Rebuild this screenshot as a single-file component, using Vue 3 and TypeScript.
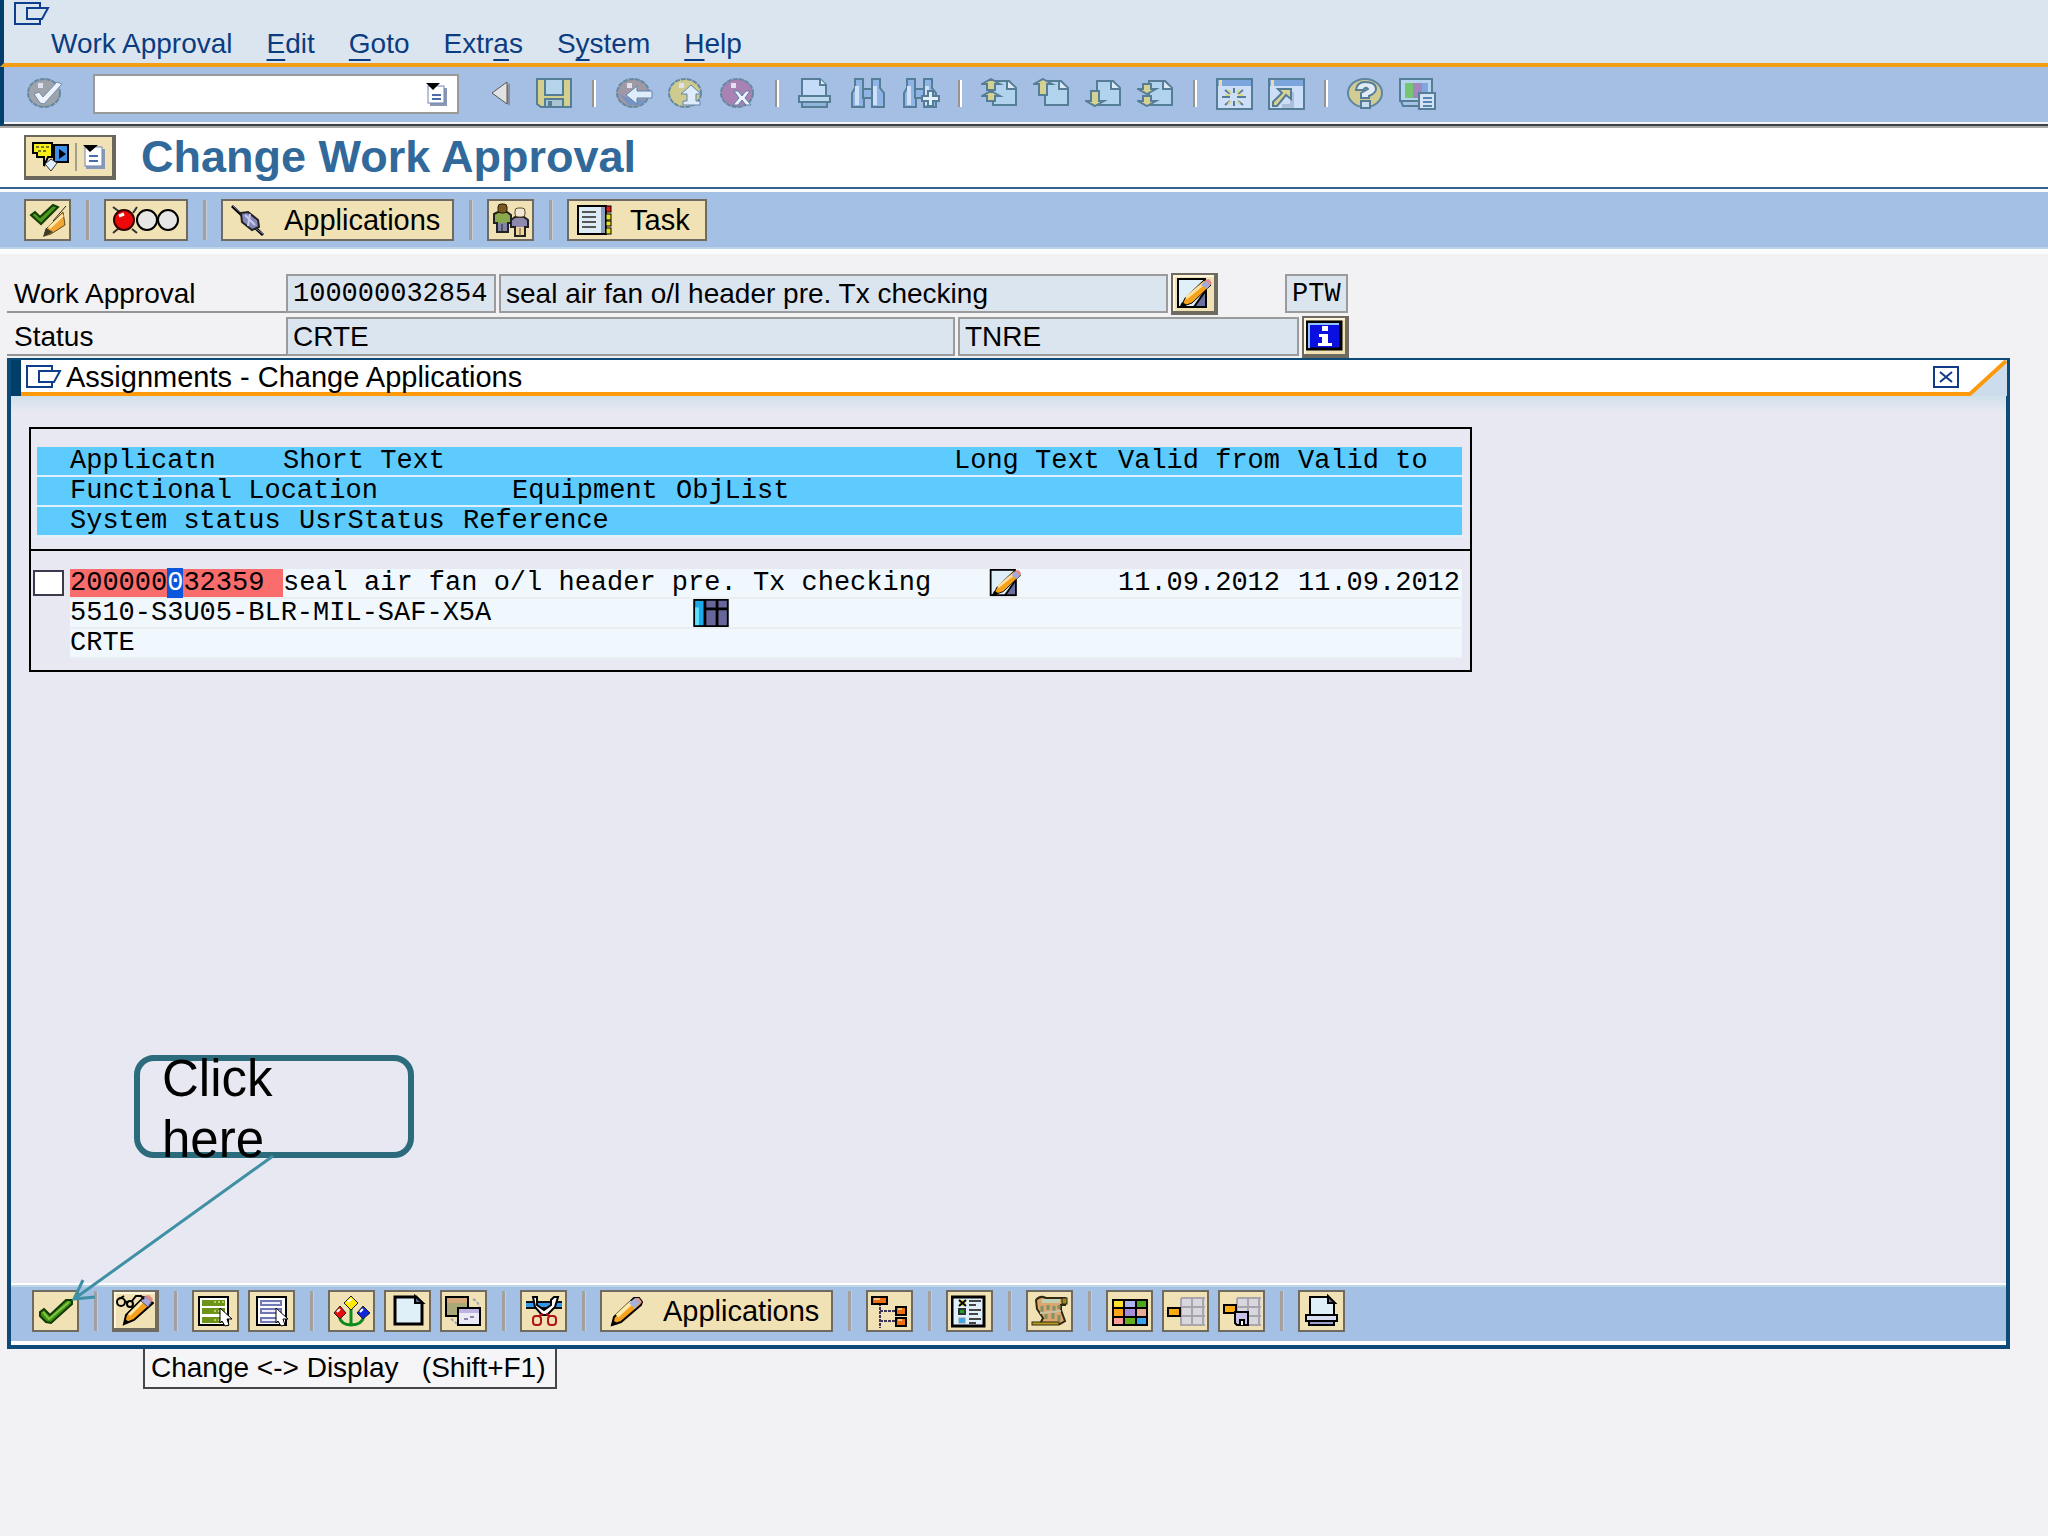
<script setup lang="ts">
import { ref } from 'vue'

type ToolEntry = { kind: 'sep' } | { kind: 'icon'; icon: string; label: string; raised?: boolean } | { kind: 'text'; icon: string; label: string; wide?: boolean }

interface MenuEntry {
  before: string
  key: string
  after: string
}

const command = ref('')
const rowChecked = ref(false)

const menus: MenuEntry[] = [
  { before: 'Work Approval', key: '', after: '' },
  { before: '', key: 'E', after: 'dit' },
  { before: '', key: 'G', after: 'oto' },
  { before: 'Extr', key: 'a', after: 's' },
  { before: 'S', key: 'y', after: 'stem' },
  { before: '', key: 'H', after: 'elp' },
]

const sep: ToolEntry = { kind: 'sep' }

const systemTools: ToolEntry[] = [
  { kind: 'icon', icon: 'triangle', label: 'Collapse command field' },
  { kind: 'icon', icon: 'save', label: 'Save' },
  sep,
  { kind: 'icon', icon: 'back', label: 'Back' },
  { kind: 'icon', icon: 'exit', label: 'Exit' },
  { kind: 'icon', icon: 'cancel', label: 'Cancel' },
  sep,
  { kind: 'icon', icon: 'printMuted', label: 'Print' },
  { kind: 'icon', icon: 'find', label: 'Find' },
  { kind: 'icon', icon: 'findNext', label: 'Find next' },
  sep,
  { kind: 'icon', icon: 'firstPage', label: 'First page' },
  { kind: 'icon', icon: 'prevPage', label: 'Previous page' },
  { kind: 'icon', icon: 'nextPage', label: 'Next page' },
  { kind: 'icon', icon: 'lastPage', label: 'Last page' },
  sep,
  { kind: 'icon', icon: 'session', label: 'Create session' },
  { kind: 'icon', icon: 'shortcut', label: 'Create shortcut' },
  sep,
  { kind: 'icon', icon: 'help', label: 'Help' },
  { kind: 'icon', icon: 'layout', label: 'Customize local layout' },
]

const appTools: ToolEntry[] = [
  { kind: 'icon', icon: 'checkPencil', label: 'Check' },
  sep,
  { kind: 'icon', icon: 'lights', label: 'Status' },
  sep,
  { kind: 'text', icon: 'connector', label: 'Applications', wide: true },
  sep,
  { kind: 'icon', icon: 'people', label: 'Partner' },
  sep,
  { kind: 'text', icon: 'notebook', label: 'Task' },
]

const popupTools: ToolEntry[] = [
  { kind: 'icon', icon: 'check', label: 'Continue' },
  sep,
  { kind: 'icon', icon: 'glassesPencil', label: 'Change or display', raised: true },
  sep,
  { kind: 'icon', icon: 'selectAll', label: 'Select all' },
  { kind: 'icon', icon: 'deselectAll', label: 'Deselect all' },
  sep,
  { kind: 'icon', icon: 'assign', label: 'Assign' },
  { kind: 'icon', icon: 'page', label: 'Create' },
  { kind: 'icon', icon: 'copy', label: 'Copy' },
  sep,
  { kind: 'icon', icon: 'cut', label: 'Delete assignment' },
  sep,
  { kind: 'text', icon: 'pencil', label: 'Applications', wide: true },
  sep,
  { kind: 'icon', icon: 'tree', label: 'Hierarchy' },
  sep,
  { kind: 'icon', icon: 'legend', label: 'Status overview' },
  sep,
  { kind: 'icon', icon: 'scroll', label: 'Action log' },
  sep,
  { kind: 'icon', icon: 'grid', label: 'Current display variant' },
  { kind: 'icon', icon: 'gridPick', label: 'Choose variant' },
  { kind: 'icon', icon: 'gridSave', label: 'Save variant' },
  sep,
  { kind: 'icon', icon: 'print', label: 'Print' },
]

const M = '#567d96'
const sheetMuted = `<path d="M12 3H28L35 10V27H12Z" fill="#b2d3ed" stroke="${M}" stroke-width="2"/><path d="M26 3V11H35" fill="#dce9f6" stroke="${M}" stroke-width="2"/>`
const up = (x: number, y: number, h: number) =>
  `<path d="M${x} ${y}L${x + 9} ${y + 5}H${x + 4}V${y + h}H${x - 4}V${y + 5}H${x - 9}Z" fill="#d5d193" stroke="${M}" stroke-width="2"/>`
const down = (x: number, y: number, h: number) =>
  `<path d="M${x} ${y}L${x + 9} ${y - 5}H${x + 4}V${y - h}H${x - 4}V${y - 5}H${x - 9}Z" fill="#d5d193" stroke="${M}" stroke-width="2"/>`
const disc = (fill: string) =>
  `<ellipse cx="18" cy="15" rx="16" ry="14" fill="${fill}" stroke="#6489a0" stroke-width="2" stroke-dasharray="5 1"/><rect x="12" y="5" width="5" height="5" fill="#dfe2ee"/>`
const binoculars = `<path d="M5 1H13V11H22V1H30V10L34 15V29H22V20H14V29H2V15L5 10Z" fill="#8fb4e6" stroke="${M}" stroke-width="2"/><path d="M7 8V27M25 8V27" stroke="#cfe0f8" stroke-width="4"/><path d="M13 11V20H22V11" fill="none" stroke="${M}" stroke-width="2"/>`
const pencilShape = `<path d="M8 31L10 22L28 4L37 10L18 27Z" fill="#f5a11c" stroke="#000" stroke-width="2"/><path d="M13 22L28 7" stroke="#ffe9a8" stroke-width="3"/><path d="M25 8L29 3L36 8L32 14Z" fill="#a6a8d8" stroke="#554f70"/><path d="M29 3L33 2L37 6L35 9Z" fill="#e58a8a"/><path d="M8 31L9 26L13 29Z" fill="#000"/>`
const cursor = `<path d="M23 14L35 25H30L32 31L28 32L25 27L23 29Z" fill="#fff" stroke="#000" stroke-width="1"/>`
const greyGrid = `<path d="M14 4H38V32H14Z" fill="#d9d7de"/><path d="M14 4H38M14 13H38M14 22H38M14 31H38M14 4V32M25 4V32M36 4V32" stroke="#a9a5ad" stroke-width="2"/>`

const icons: Record<string, string> = {
  enter: `${disc('#9fa4ac')}<path d="M8 16L13 14L17 19L31 4L36 6L18 26L14 25Z" fill="#edf3fc" stroke="#6f8ca8" stroke-width="1"/>`,
  triangle: `<path d="M10 16L26 5V28Z" fill="#8a8f9a"/><path d="M8 15L23 4V26Z" fill="#e2e2e2" stroke="#555" stroke-width="1"/>`,
  save: `<path d="M1 1H35V29H5L1 26Z" fill="#d3d08f" stroke="${M}" stroke-width="2"/><rect x="9" y="1" width="18" height="16" fill="#b7d5ea" stroke="${M}" stroke-width="2"/><rect x="9" y="21" width="18" height="8" fill="#a9c5d4" stroke="${M}" stroke-width="2"/><rect x="12" y="23" width="4" height="5" fill="${M}"/>`,
  back: `${disc('#a098a4')}<path d="M4 16L14 27H26L30 22H18Z" fill="#7594c6"/><path d="M11 17L22 8V13H37V20H22V26Z" fill="#dfecfb" stroke="#5f84ae" stroke-width="1"/>`,
  exit: `${disc('#cfcb8e')}<path d="M24 7L34 16H29V23H33V27H16V23H20V16H14Z" fill="#dfecfb" stroke="#5f84ae" stroke-width="1"/>`,
  cancel: `${disc('#a782b3')}<path d="M15 13H19L23 18L27 13H31L26 20L32 27H27L23 22L19 27H14L20 20Z" fill="#eef3fc" stroke="#5f7ea8" stroke-width="1"/>`,
  printMuted: `<path d="M4 17V1H22L28 7V17" fill="#c4dcf8" stroke="${M}" stroke-width="2"/><path d="M22 1V7H28" fill="#dce9f6" stroke="${M}" stroke-width="2"/><rect x="1" y="18" width="31" height="6" fill="#bcd7ee" stroke="${M}" stroke-width="2"/><rect x="4" y="24" width="25" height="5" fill="#8fb4e0" stroke="${M}" stroke-width="2"/>`,
  find: binoculars,
  findNext: `${binoculars}<path d="M26 13H31V18H37V23H31V28H26V23H20V18H26Z" fill="#e3eefb" stroke="${M}" stroke-width="2"/>`,
  firstPage: sheetMuted + up(10, 1, 11) + up(10, 13, 10),
  prevPage: sheetMuted + up(10, 1, 16),
  nextPage: sheetMuted + down(10, 28, 15),
  lastPage: sheetMuted + down(10, 16, 10) + down(10, 28, 10),
  session: `<rect x="1" y="1" width="35" height="30" fill="#cddff8" stroke="${M}" stroke-width="2"/><rect x="2" y="2" width="33" height="6" fill="#7ba5dc"/><rect x="3" y="2" width="3" height="6" fill="#e8dca0"/><path d="M6 19H14M21 19H30M18 10V15M18 23V28M9 12L14 16M27 12L22 16M9 27L14 23M27 27L22 23" stroke="${M}" stroke-width="2"/><path d="M9 17H14M22 17H27M12 12L15 15M24 12L21 15M12 26L15 23M24 26L21 23" stroke="#d9d58a" stroke-width="2"/>`,
  shortcut: `<rect x="1" y="1" width="35" height="30" fill="#cddff8" stroke="${M}" stroke-width="2"/><rect x="2" y="2" width="33" height="6" fill="#7ba5dc"/><rect x="3" y="2" width="3" height="6" fill="#e8dca0"/><path d="M24 14V28H14" stroke="#a9bfdc" stroke-width="4" fill="none"/><path d="M10 11H23V21L18 17L9 28L5 28V24L14 15Z" fill="#d9d293" stroke="${M}" stroke-width="2"/>`,
  help: `<ellipse cx="18" cy="15" rx="17" ry="14" fill="#d0cc93" stroke="#5f86a0" stroke-width="2"/><path d="M9 12Q10 4 18 4Q29 4 29 11Q29 15 22 18V20H14V15L21 11Q19 8 16 12Z" fill="#e1ebf8" stroke="${M}" stroke-width="2"/><rect x="14" y="23" width="9" height="7" fill="#c9dced" stroke="${M}" stroke-width="2"/>`,
  layout: `<rect x="1" y="1" width="32" height="22" fill="#b6d3ef" stroke="${M}" stroke-width="2"/><rect x="6" y="5" width="8" height="15" fill="#76c573"/><rect x="14" y="5" width="9" height="15" fill="#a287bd"/><rect x="23" y="5" width="6" height="15" fill="#80a7e0"/><path d="M2 23H20V28H4Z" fill="#a7c3e4" stroke="${M}" stroke-width="2"/><rect x="20" y="15" width="16" height="16" fill="#d3e3f6" stroke="${M}" stroke-width="2"/><path d="M24 20H33M24 24H33M24 28H33" stroke="#5a84b0" stroke-width="2"/>`,

  checkPencil: `<path d="M2 12L6 9L11 14L24 2L29 4L12 21Z" fill="#4b9a1e" stroke="#143d05" stroke-width="2"/><path d="M15 33L17 26L34 9L36 22L22 31Z" fill="#f0a634" stroke="#6a4a17" stroke-width="1"/><path d="M20 25L34 12" stroke="#ffe7b0" stroke-width="3"/><path d="M14 34L17 25L24 29Z" fill="#3c3c2c"/><path d="M24 18L37 3" stroke="#222" stroke-width="1"/>`,
  check: `<path d="M3 18L7 15L13 21L29 6H35V10L14 29L9 28L3 22Z" fill="#3f8f10" stroke="#123806" stroke-width="2"/><path d="M6 18L12 25L32 8" fill="none" stroke="#7fc442" stroke-width="2"/>`,
  glassesPencil: `${pencilShape}<ellipse cx="5" cy="9" rx="4" ry="4" fill="none" stroke="#000" stroke-width="2"/><ellipse cx="14" cy="11" rx="3" ry="3" fill="none" stroke="#000" stroke-width="2"/><path d="M3 6L8 3M9 8L12 10M16 8L20 3H25L28 6" fill="none" stroke="#000" stroke-width="2"/>`,
  selectAll: `<rect x="2" y="3" width="29" height="28" fill="#fff" stroke="#000" stroke-width="2"/><rect x="5" y="6" width="23" height="6" fill="#6d9418"/><rect x="5" y="14" width="23" height="6" fill="#6d9418"/><rect x="5" y="23" width="23" height="6" fill="#6d9418"/><path d="M17 8H27M17 17H23M17 26H22" stroke="#b7cf62" stroke-width="2" stroke-dasharray="2 2"/>${cursor}`,
  deselectAll: `<rect x="4" y="3" width="29" height="28" fill="#fff" stroke="#000" stroke-width="2"/><g fill="#eef" stroke="#7078b4" stroke-width="2"><rect x="8" y="7" width="20" height="4"/><rect x="8" y="15" width="20" height="4"/><rect x="8" y="24" width="20" height="4"/></g>${cursor}`,
  assign: `<path d="M18 12V31M6 22Q8 31 18 31Q29 31 31 22" fill="none" stroke="#0b8a1e" stroke-width="3"/><path d="M18 2L25 9L18 16L11 9Z" fill="#ffe900" stroke="#222"/><path d="M7 12L13 19L7 25L1 19Z" fill="#e90b0b" stroke="#222"/><path d="M30 12L37 19L30 25L24 19Z" fill="#1028d8" stroke="#222"/><path d="M15 8L18 5M4 18L7 15M27 18L30 15" stroke="#fff" stroke-width="2"/>`,
  page: `<path d="M6 3H27L33 9V30H6Z" fill="#e0f0f8" stroke="#000" stroke-width="3"/><path d="M26 2V9H34Z" fill="#596080" stroke="#000" stroke-width="2"/>`,
  copy: `<path d="M4 20Q8 30 16 30M28 5Q34 8 34 14" fill="none" stroke="#9ea0bd" stroke-width="2" stroke-dasharray="3 2"/><rect x="1" y="3" width="22" height="19" fill="#a8a878" stroke="#000" stroke-width="2"/><rect x="2" y="4" width="20" height="5" fill="#d6a877"/><rect x="13" y="14" width="22" height="17" fill="#ece9f6" stroke="#000" stroke-width="2"/><rect x="14" y="15" width="20" height="4" fill="#bdb3e0"/><path d="M19 25H23M25 23H29" stroke="#8b84aa" stroke-width="2"/>`,
  cut: `<path d="M1 8H37M1 14H37" stroke="#111" stroke-width="2"/><path d="M1 11H37" stroke="#3498ea" stroke-width="4"/><path d="M8 3H12V11L19 16L26 11V6L29 3H33L30 13L22 21H17L10 13Z" fill="#fff" stroke="#000" stroke-width="2"/><rect x="8" y="22" width="8" height="9" rx="3" fill="none" stroke="#b01414" stroke-width="2"/><rect x="23" y="22" width="8" height="9" rx="3" fill="none" stroke="#b01414" stroke-width="2"/><path d="M14 22L18 20M25 22L21 20" stroke="#b01414" stroke-width="2"/>`,
  pencil: `<path d="M4 31L6 23L26 4H31L34 8L33 11L13 28Z" fill="#f5a11c" stroke="#000" stroke-width="2"/><path d="M9 22L24 8" stroke="#ffe9a8" stroke-width="4"/><path d="M21 9L27 4L33 7L27 15Z" fill="#a6b1dc"/><path d="M27 4L31 4L34 8L32 10Z" fill="#d99a9a"/><path d="M3 32L5 26L10 30Z" fill="#000"/>`,
  tree: `<path d="M9 9V34M9 17H24M9 27H24" stroke="#3e3654" stroke-width="2" stroke-dasharray="3 1"/><g stroke="#000" stroke-width="2" fill="#ee6f12"><rect x="1" y="3" width="15" height="7"/><rect x="25" y="13" width="10" height="8"/><rect x="25" y="24" width="10" height="8"/></g><path d="M3 5H9M27 15H31M27 26H31" stroke="#ffc37a" stroke-width="2"/>`,
  legend: `<rect x="1" y="3" width="32" height="29" fill="#dff0fb" stroke="#000" stroke-width="3"/><rect x="8" y="6" width="7" height="6" fill="#e6e325"/><path d="M8 6L15 12M15 6L8 12" stroke="#000" stroke-width="2"/><rect x="8" y="15" width="6" height="5" fill="#17a12c" stroke="#333" stroke-width="2"/><rect x="8" y="24" width="6" height="5" fill="#38a6f0" stroke="#89a"/><path d="M18 7H30M18 11H25M18 16H30M18 20H27M18 25H30M18 29H25" stroke="#444" stroke-width="2"/>`,
  scroll: `<path d="M5 6Q9 1 15 4H34V11H30V16L34 27L29 30H9L12 24L6 15Z" fill="#dca66c" stroke="#2f2a10" stroke-width="2"/><path d="M11 5H29V9H11Z" fill="#bfd0b5"/><path d="M11 12V18M17 11V16M23 12V17M28 11V15M15 20V25M22 19V25M28 21V27" stroke="#7f9168" stroke-width="3"/><path d="M9 19L30 17" stroke="#c9c0a8" stroke-width="2"/><rect x="1" y="28" width="27" height="3" fill="#b89a1e" stroke="#2f2a10"/><rect x="31" y="4" width="5" height="6" fill="#9b8d1c" stroke="#222"/>`,
  grid: `<rect x="1" y="5" width="36" height="27" fill="#000"/><g><rect x="3" y="7" width="9" height="6" fill="#ffe02e"/><rect x="14" y="7" width="10" height="6" fill="#aeb3ec"/><rect x="26" y="7" width="9" height="6" fill="#4ba81e"/><rect x="3" y="15" width="9" height="7" fill="#ffa318"/><rect x="14" y="15" width="10" height="7" fill="#a68ed8"/><rect x="26" y="15" width="9" height="7" fill="#e8ae93"/><rect x="3" y="24" width="9" height="6" fill="#ff9c9c"/><rect x="14" y="24" width="10" height="6" fill="#66b01d"/><rect x="26" y="24" width="9" height="6" fill="#38a3f0"/></g>`,
  gridPick: `${greyGrid}<rect x="1" y="14" width="12" height="8" fill="#ffac14" stroke="#000" stroke-width="2"/>`,
  gridSave: `${greyGrid}<rect x="1" y="11" width="12" height="8" fill="#ffac14" stroke="#000" stroke-width="2"/><path d="M12 18H25V31H14L12 29Z" fill="#c9c2e8" stroke="#000" stroke-width="2"/><rect x="16" y="25" width="6" height="6" fill="#000"/><rect x="18" y="27" width="2" height="4" fill="#fff"/>`,
  print: `<path d="M7 20V3H25L31 9V20" fill="#e0f0f8" stroke="#000" stroke-width="2"/><path d="M25 2V9H32Z" fill="#666c90" stroke="#000" stroke-width="2"/><rect x="3" y="21" width="31" height="6" fill="#d9ddf0" stroke="#000" stroke-width="2"/><rect x="6" y="27" width="25" height="4" fill="#9a9fd0" stroke="#000" stroke-width="2"/>`,
  connector: `<path d="M3 3L34 32" stroke="#000" stroke-width="3"/><path d="M4 3L13 11M26 25L34 31" stroke="#8a8fd0" stroke-width="1"/><path d="M12 10L19 9L29 17L30 24L23 27L13 19Z" fill="#8489b8" stroke="#222" stroke-width="2"/><path d="M16 12L26 22M21 11L19 23" stroke="#c6c9ec" stroke-width="2"/>`,
  people: `<path d="M2 11L6 9H15L19 12V20H16V29H5V20H2Z" fill="#8aa94c" stroke="#222" stroke-width="2"/><rect x="6" y="20" width="9" height="8" fill="#8184a8"/><path d="M10 21V29" stroke="#222" stroke-width="1"/><rect x="6" y="1" width="9" height="9" rx="3" fill="#7a5a20" stroke="#2a1a05"/><path d="M19 17L23 14H32L36 17V24H33V33H23V24H19Z" fill="#8d88ae" stroke="#222" stroke-width="2"/><rect x="24" y="24" width="8" height="8" fill="#ecd29c"/><path d="M28 25V33" stroke="#6a5428" stroke-width="1"/><rect x="23" y="5" width="10" height="9" rx="3" fill="#efe6d4" stroke="#5a4a2a"/>`,
  notebook: `<path d="M3 3H31V31H3Z" fill="#dcebf4" stroke="#000" stroke-width="2"/><rect x="26" y="4" width="4" height="26" fill="#8d9dbe"/><path d="M7 9H21M7 14H21M7 19H21M7 24H21" stroke="#555" stroke-width="2"/><g stroke="#000" stroke-width="1"><rect x="31" y="3" width="5" height="6" fill="#e01c1c"/><rect x="31" y="11" width="5" height="6" fill="#e5e020"/><rect x="31" y="18" width="5" height="5" fill="#e5e020"/><rect x="31" y="25" width="5" height="6" fill="#e5e020"/></g>`,
  editNote: `<rect x="3" y="3" width="27" height="28" fill="#e0f0f8" stroke="#000" stroke-width="2"/><path d="M19 31H31V14Z" fill="#6a70a0" stroke="#000" stroke-width="2"/><path d="M6 31L10 22L29 4L36 9L17 27Z" fill="#f5a11c" stroke="#000" stroke-width="1"/><path d="M11 22L28 8" stroke="#ffe0a0" stroke-width="3"/><path d="M26 9L31 4L36 8L32 13Z" fill="#a6a8d8"/><path d="M30 4L34 3L37 7L35 9Z" fill="#e58a8a"/><path d="M4 32L7 26L12 29Z" fill="#000"/>`,
  info: `<rect x="1" y="3" width="34" height="27" fill="#0a10e0" stroke="#000" stroke-width="3"/><path d="M3 29V5H33" fill="none" stroke="#8ec3ff" stroke-width="2"/><path d="M16 7H22V12H16ZM13 15H22V24H26V27H12V24H16V18H13Z" fill="#fff"/>`,
}
</script>

<template>
  <div class="screen">
    <header class="top">
      <div class="menu-area">
        <svg class="exit-mark" viewBox="0 0 36 24" aria-hidden="true">
          <path d="M26 6V1H1V22H26V18M13 6H34L28 17H13Z" />
        </svg>
        <nav class="menu" aria-label="Main menu">
          <button v-for="m in menus" :key="m.before + m.key + m.after" type="button">{{ m.before }}<u v-if="m.key">{{ m.key }}</u>{{ m.after }}</button>
        </nav>
      </div>
      <div class="system-bar">
        <button class="plain" type="button" aria-label="Enter">
          <svg viewBox="0 0 38 32" v-html="icons.enter" />
        </button>
        <div class="command">
          <input v-model="command" type="text" aria-label="Command" />
          <button type="button" aria-label="Command history">
            <svg viewBox="0 0 22 24" aria-hidden="true">
              <rect x="5" y="6" width="17" height="18" fill="#8b98b4" />
              <rect x="3" y="4" width="16" height="17" fill="#fff" stroke="#6e86b4" />
              <path d="M7 13H16M7 17H16" stroke="#4a6aa8" stroke-width="2" />
              <path d="M1 1H15L8 8Z" fill="#000" />
            </svg>
          </button>
        </div>
        <template v-for="(t, i) in systemTools" :key="i">
          <span v-if="t.kind === 'sep'" class="line" />
          <button v-else class="plain" type="button" :aria-label="t.label">
            <svg viewBox="0 0 38 32" v-html="icons[t.icon]" />
          </button>
        </template>
      </div>
    </header>

    <div class="title-row">
      <button class="object-services" type="button" aria-label="Services for object">
        <svg viewBox="0 0 80 34" aria-hidden="true">
          <path d="M3 4H22V18H18L14 27V18H7V14H3Z" fill="#f7ee1c" stroke="#000" stroke-width="2" />
          <path d="M6 8H20M8 12H18" stroke="#777a20" stroke-width="2" stroke-dasharray="3 2" />
          <rect x="24" y="6" width="14" height="17" fill="#3f8fe8" stroke="#000" stroke-width="2" />
          <path d="M29 10V20L36 15Z" fill="#000" />
          <path d="M15 25L21 20L27 24L21 32Z" fill="#dff0ff" stroke="#333" />
          <path d="M46 4V32" stroke="#a49f8c" stroke-width="2" />
          <rect x="56" y="10" width="19" height="20" fill="#8b98b4" />
          <rect x="55" y="8" width="17" height="19" fill="#fff" stroke="#6e86b4" />
          <path d="M59 17H68M59 22H68" stroke="#4a6aa8" stroke-width="2" />
          <path d="M53 6H68L60 13Z" fill="#000" />
        </svg>
      </button>
      <h1>Change Work Approval</h1>
    </div>

    <div class="bar app-bar">
      <template v-for="(t, i) in appTools" :key="i">
        <span v-if="t.kind === 'sep'" class="divider" />
        <button v-else class="tool" :class="{ text: t.kind === 'text', wide: t.kind === 'text' && t.wide, lights: t.icon === 'lights' }" type="button" :aria-label="t.label">
          <svg v-if="t.icon === 'lights'" viewBox="0 0 72 34" aria-hidden="true">
            <path d="M3 4L11 10M23 10L27 4M3 30L9 25M22 26L27 30" stroke="#333" stroke-width="2" />
            <circle cx="14" cy="17" r="10" fill="#ee0808" stroke="#300" stroke-width="2" />
            <path d="M9 13L14 11" stroke="#fff" stroke-width="3" />
            <circle cx="37" cy="17" r="10" fill="#e6e6e6" stroke="#000" stroke-width="2" />
            <circle cx="58" cy="17" r="10" fill="#e6e6e6" stroke="#000" stroke-width="2" />
          </svg>
          <svg v-else viewBox="0 0 38 34" v-html="icons[t.icon]" />
          <span v-if="t.kind === 'text'">{{ t.label }}</span>
        </button>
      </template>
    </div>

    <section class="form">
      <div class="form-row">
        <label for="wa">Work Approval</label>
        <input id="wa" class="mono number" readonly value="100000032854" />
        <input class="desc" readonly aria-label="Description" value="seal air fan o/l header pre. Tx checking" />
        <button class="tool raised" type="button" aria-label="Long text">
          <svg viewBox="0 0 38 34" v-html="icons.editNote" />
        </button>
        <input class="mono usage" readonly aria-label="Usage" value="PTW" />
      </div>
      <div class="form-row">
        <label for="st">Status</label>
        <input id="st" class="status" readonly value="CRTE" />
        <input class="user-status" readonly aria-label="User status" value="TNRE" />
        <button class="tool raised" type="button" aria-label="Status details">
          <svg viewBox="0 0 38 34" v-html="icons.info" />
        </button>
      </div>
    </section>

    <section class="popup" aria-labelledby="popup-title">
      <div class="popup-title">
        <svg class="exit-mark" viewBox="0 0 36 24" aria-hidden="true">
          <path d="M26 6V1H1V22H26V18M13 6H34L28 17H13Z" />
        </svg>
        <h2 id="popup-title">Assignments - Change Applications</h2>
        <button class="close" type="button" aria-label="Close">
          <svg viewBox="0 0 26 22" aria-hidden="true">
            <rect x="1" y="1" width="24" height="20" fill="#fff" stroke="#123a86" stroke-width="2" />
            <path d="M7 6L19 16M19 6L7 16" stroke="#123a86" stroke-width="2" />
          </svg>
        </button>
        <svg class="corner" viewBox="0 0 40 36" aria-hidden="true">
          <path d="M0 0H40V36H0Z" fill="#cddcec" />
          <path d="M0 0H39L3 34H0Z" fill="#fff" />
          <path d="M0 34H3L39 1" fill="none" stroke="#fc9a0b" stroke-width="4" />
        </svg>
      </div>

      <div class="popup-body">
        <div class="list">
          <table>
            <colgroup>
              <col class="c-mark" /><col class="c13" /><col class="c1" /><col class="c10" /><col class="c3" /><col class="c10" /><col class="c17" /><col class="c10" /><col class="c11" /><col class="c-last" />
            </colgroup>
            <thead>
              <tr><th></th><th>Applicatn</th><th colspan="5">Short Text</th><th>Long Text</th><th>Valid from</th><th>Valid to</th></tr>
              <tr><th></th><th colspan="4">Functional Location</th><th>Equipment</th><th colspan="4">ObjList</th></tr>
              <tr><th></th><th colspan="2">System status</th><th>UsrStatus</th><th colspan="6">Reference</th></tr>
              <tr class="rule" aria-hidden="true"><td colspan="10"></td></tr>
            </thead>
            <tbody>
              <tr>
                <td class="mark"><input v-model="rowChecked" type="checkbox" aria-label="Select application" /></td>
                <td class="hit">200000<mark>0</mark>32359</td>
                <td colspan="5">seal air fan o/l header pre. Tx checking</td>
                <td class="note"><svg viewBox="2 2 36 31" v-html="icons.editNote" /></td>
                <td>11.09.2012</td>
                <td>11.09.2012</td>
              </tr>
              <tr>
                <td class="mark"></td>
                <td colspan="4">5510-S3U05-BLR-MIL-SAF-X5A</td>
                <td></td>
                <td class="object" colspan="4">
                  <svg viewBox="0 0 38 30" aria-hidden="true">
                    <rect width="38" height="30" fill="#000" />
                    <rect x="2" y="2" width="9" height="26" fill="#1fa9e8" />
                    <path d="M2 9H6V28H2Z" fill="#62e4ff" />
                    <path d="M14 2H24V9H14ZM27 2H36V9H27ZM14 12H24V28H14ZM27 12H36V28H27Z" fill="#67669a" />
                  </svg>
                </td>
              </tr>
              <tr><td class="mark"></td><td colspan="9">CRTE</td></tr>
            </tbody>
          </table>
        </div>
      </div>

      <div class="bar popup-bar">
        <template v-for="(t, i) in popupTools" :key="i">
          <span v-if="t.kind === 'sep'" class="divider" />
          <button v-else class="tool" :class="{ text: t.kind === 'text', wide: t.kind === 'text' && t.wide, raised: t.kind === 'icon' && t.raised }" type="button" :aria-label="t.label">
            <svg viewBox="0 0 38 34" v-html="icons[t.icon]" />
            <span v-if="t.kind === 'text'">{{ t.label }}</span>
          </button>
        </template>
      </div>

      <div class="callout">Click<br />here</div>
      <svg class="arrow" viewBox="0 0 212 155" aria-hidden="true">
        <path d="M205 6L6 149M15 130L6 149L27 147" />
      </svg>
      <div class="tooltip" role="tooltip">Change &lt;-&gt; Display &nbsp;&nbsp;(Shift+F1)</div>
    </section>
  </div>
</template>

<style>
body {
  margin: 0;
  background: #f2f1f4;
}
</style>

<style scoped>
.screen {
  box-sizing: border-box;
  display: flex;
  flex-direction: column;
  min-height: 100vh;
  padding-bottom: 187px;
  overflow: hidden;
  background: #f2f1f4;
  color: #000;
  font: 28px/32px "Liberation Sans", Arial, sans-serif;
}

.screen * {
  box-sizing: border-box;
}

button,
input {
  margin: 0;
  padding: 0;
  border: 0;
  border-radius: 0;
  background: none;
  color: inherit;
  font: inherit;
}

svg {
  display: block;
  flex: none;
}

h1,
h2 {
  margin: 0;
}

.top {
  border-bottom: 2px solid #a9a9a6;
  background: #dbe5f0;
}

.menu-area {
  height: 67px;
  border-bottom: 4px solid #f39c16;
  border-left: 4px solid #003f6c;
  padding: 2px 0 0 10px;
}

.exit-mark {
  width: 36px;
  height: 24px;
  fill: none;
  stroke: #0f3f8c;
  stroke-width: 2;
}

.menu {
  display: flex;
  gap: 34px;
  padding-left: 37px;
  color: #0b3c80;
}

.menu button {
  line-height: 36px;
}

.menu u {
  text-decoration-thickness: 2px;
  text-underline-offset: 6px;
  text-decoration-skip-ink: none;
}

.system-bar {
  display: flex;
  align-items: center;
  gap: 14px;
  height: 59px;
  padding: 0 22px 4px;
  border-bottom: 2px solid #3c4048;
  border-left: 4px solid #003f6c;
  box-shadow: inset 0 -2px #f3f7fb;
  background: #a4bfe3;
}

.plain,
.plain svg {
  width: 38px;
  height: 32px;
}

.line {
  width: 4px;
  height: 27px;
  margin: 0 5px 0 4px;
  border-left: 2px solid #98958e;
  background: #fff;
}

.command {
  display: flex;
  width: 366px;
  height: 40px;
  margin: 0 11px 0 15px;
  border: 2px solid #9a9a98;
  background: #fff;
}

.command input {
  flex: 1;
  min-width: 0;
}

.command button {
  padding: 0 10px;
}

.command svg {
  width: 22px;
  height: 24px;
}

.title-row {
  display: flex;
  align-items: center;
  gap: 25px;
  height: 61px;
  padding: 0 24px 1px;
  border-bottom: 2px solid #34648f;
  background: #fff;
}

.object-services {
  width: 92px;
  height: 45px;
  padding: 2px 4px;
  border: solid #6b675c;
  border-width: 2px 4px 4px 2px;
  background: #f0e2b4;
}

.object-services svg {
  width: 80px;
  height: 34px;
}

h1 {
  color: #31699b;
  font-size: 45px;
  font-weight: 700;
  line-height: 50px;
}

.bar {
  display: flex;
  align-items: center;
  gap: 9px;
  background: #a4c0e4;
}

.app-bar {
  height: 65px;
  padding: 0 24px 1px;
  border-top: 3px solid #fafcfe;
  border-bottom: 5px solid #fafcfe;
  box-shadow: inset 0 -2px #bcd3ea;
}

.divider {
  width: 4px;
  height: 40px;
  margin: 0 5px 0 6px;
  border-left: 3px solid #a3a19d;
  background: #c2cedd;
}

.tool {
  display: flex;
  flex: none;
  align-items: center;
  justify-content: center;
  width: 47px;
  height: 42px;
  border: 2px solid #6f6b60;
  background: #f0e2b4;
}

.tool svg {
  width: 38px;
  height: 34px;
}

.tool.text {
  justify-content: flex-start;
  gap: 17px;
  width: 140px;
  padding-left: 6px;
  font-size: 29px;
}

.tool.wide {
  width: 233px;
}

.tool.lights {
  width: 84px;
}

.tool.lights svg {
  width: 72px;
}

.tool.raised {
  border-width: 2px 4px 4px 2px;
  box-shadow: inset 2px 2px #fdf6dc;
}

.form {
  padding: 18px 0 0 7px;
}

.form-row {
  display: flex;
  align-items: center;
  gap: 3px;
  height: 43px;
}

.form-row label {
  width: 279px;
  height: 39px;
  margin-right: -3px;
  padding-left: 7px;
  border-bottom: 2px solid #949494;
  line-height: 40px;
}

.form-row input {
  height: 39px;
  padding: 0 5px;
  border: 2px solid #9b9b9b;
  background: #dbe5f0;
}

.form-row .mono {
  font: 27px/36px "Liberation Mono", monospace;
}

.form-row .number {
  width: 210px;
}

.form-row .desc {
  width: 669px;
}

.form-row .usage {
  width: 63px;
  margin-left: 64px;
}

.form-row .status {
  width: 669px;
}

.form-row .user-status {
  width: 341px;
}

.popup {
  position: relative;
  display: flex;
  flex: 1;
  flex-direction: column;
  margin: 0 38px 0 7px;
  border: 4px solid #0e4a77;
  border-top-width: 2px;
  background: #e7e8f1;
}

.popup-title {
  display: flex;
  align-items: center;
  height: 36px;
  padding-bottom: 2px;
  border-left: 10px solid #003f69;
  background: linear-gradient(#fff 32px, #fc9a0b 32px);
}

.popup-title .exit-mark {
  margin: 0 4px 0 5px;
}

.popup-title h2 {
  flex: 1;
  font-size: 29px;
  font-weight: 400;
  line-height: 32px;
}

.close {
  width: 26px;
  height: 22px;
}

.corner {
  width: 40px;
  height: 36px;
  margin: 0 -1px -2px 8px;
}

.popup-body {
  flex: 1;
  padding: 31px 18px;
  background: linear-gradient(#d0e0ea, #e7e8f1 16px);
}

.list {
  width: 1443px;
  padding-bottom: 11px;
  border: 2px solid #000;
}

table {
  width: 100%;
  border-collapse: separate;
  border-spacing: 0;
  table-layout: fixed;
  font: 27px/28px "Liberation Mono", monospace;
}

thead::before,
tbody::before {
  content: "";
  display: table-row;
  height: 18px;
}

.c-mark { width: 39px; }
.c1 { width: 16px; }
.c3 { width: 49px; }
.c10 { width: 164px; }
.c11 { width: 180px; }
.c13 { width: 213px; }
.c17 { width: 278px; }
.c-last { width: 172px; }

th,
td {
  height: 30px;
  padding: 0;
  border-bottom: 2px solid #e1f1fb;
  background-clip: padding-box;
  font-weight: 400;
  text-align: left;
  white-space: pre;
}

th {
  background-color: #5ecbff;
}

th:first-child {
  border-left: 6px solid #e7e8f1;
}

th:last-child,
td:last-child {
  border-right: 8px solid #e7e8f1;
}

td {
  border-bottom-color: #e8eef2;
  background-color: #f0f8fe;
}

.rule td {
  height: 14px;
  border-right: 0;
  border-bottom: 2px solid #000;
  background: none;
}

.mark {
  border-color: transparent;
  background: none;
}

.mark input {
  display: block;
  width: 31px;
  height: 26px;
  margin-left: 2px;
  border: 2px solid #3c3a4c;
  background: #fff;
  appearance: none;
}

.hit {
  background-color: #f96c6c;
}

mark {
  background: #0b57dc;
  color: #fff;
}

.note svg {
  width: 36px;
  height: 28px;
  margin-left: 34px;
  overflow: visible;
}

.object svg {
  width: 38px;
  height: 28px;
  margin-left: 16px;
}

.popup-bar {
  height: 62px;
  padding: 0 21px 5px;
  border-top: 2px solid #fff;
  border-bottom: 4px solid #fff;
  box-shadow: inset 0 2px #bed7e4;
}

.callout {
  position: absolute;
  bottom: 187px;
  left: 123px;
  display: flex;
  align-items: center;
  width: 280px;
  height: 103px;
  padding: 4px 0 0 22px;
  border: 6px solid #2b6b7c;
  border-radius: 20px;
  font-size: 51px;
  line-height: 61px;
}

.arrow {
  position: absolute;
  bottom: 40px;
  left: 57px;
  width: 212px;
  height: 155px;
  fill: none;
  stroke: #3f90a5;
  stroke-width: 3;
}

.tooltip {
  position: absolute;
  top: calc(100% + 4px);
  left: 132px;
  width: 414px;
  height: 40px;
  padding: 0 6px;
  border: 2px solid #44464a;
  border-top: 0;
  background: #f5f5f8;
  line-height: 38px;
  white-space: nowrap;
}
</style>
